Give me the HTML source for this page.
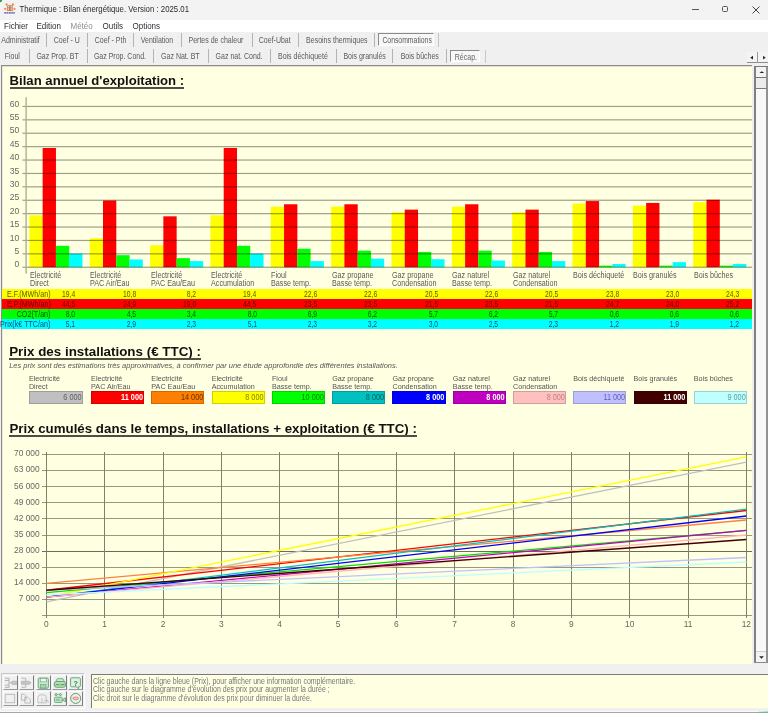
<!DOCTYPE html>
<html><head><meta charset="utf-8"><style>
html,body{margin:0;padding:0;}
body{width:768px;height:713px;overflow:hidden;position:relative;background:#f0f0f0;font-family:'Liberation Sans',sans-serif;}
.r{position:absolute;box-sizing:border-box;}
.t{position:absolute;white-space:nowrap;line-height:1;font-family:'Liberation Sans',sans-serif;}
</style></head><body>
<div class="r" style="left:0px;top:0px;width:768px;height:19.5px;background:#f3f3f3;"></div><svg class="r" style="left:0;top:0" width="18" height="16" viewBox="0 0 18 16">
<circle cx="0" cy="0" r="2.2" fill="#2e9e48"/>
<rect x="5.6" y="4.2" width="8.6" height="8" fill="#f6f0c8"/>
<rect x="7.2" y="5.3" width="5.4" height="5.7" fill="#b8706a"/>
<rect x="7.9" y="6" width="1.3" height="1.1" fill="#f0d8d0"/><rect x="10.6" y="6" width="1.3" height="1.1" fill="#f0d8d0"/>
<rect x="7.9" y="7.6" width="1.3" height="1.1" fill="#f0d8d0"/><rect x="10.6" y="7.6" width="1.3" height="1.1" fill="#f0d8d0"/>
<rect x="7.9" y="9.2" width="1.3" height="1.1" fill="#f0d8d0"/><rect x="10.6" y="9.2" width="1.3" height="1.1" fill="#f0d8d0"/>
<circle cx="6.5" cy="4.4" r="1.05" fill="#ff7a3a"/><circle cx="12.9" cy="4.4" r="1.05" fill="#ff7a3a"/>
<circle cx="5.2" cy="8.9" r="1.15" fill="#ff8a40"/><circle cx="14.5" cy="8.9" r="1.15" fill="#ff8a40"/>
<rect x="4.3" y="12.1" width="10.6" height="1.5" fill="#e8e0a0"/>
<rect x="4.3" y="12.1" width="1.6" height="1.5" fill="#6a6ae0"/><rect x="6.4" y="12.1" width="2" height="1.5" fill="#6a6ae0"/><rect x="9" y="12.1" width="1.8" height="1.5" fill="#6a6ae0"/><rect x="11.3" y="12.1" width="1.8" height="1.5" fill="#6a6ae0"/><rect x="13.4" y="12.1" width="1.5" height="1.5" fill="#6a6ae0"/>
</svg><div class="t" style="left:19.50px;top:6.07px;font-size:7.8px;color:#2a2a2a;font-weight:normal;font-style:normal;transform:scale(1.0,1.1);transform-origin:left 6.63px;">Thermique : Bilan énergétique. Version : 2025.01</div><div class="r" style="left:692px;top:9px;width:7px;height:1px;background:#555;"></div><div class="r" style="left:722px;top:6.3px;width:5.5px;height:5.5px;border:1px solid #555;border-radius:1.5px"></div><svg class="r" style="left:752px;top:6px" width="8" height="8" viewBox="0 0 8 8"><path d="M0.5 0.5 L7.5 7.5 M7.5 0.5 L0.5 7.5" stroke="#444" stroke-width="1"/></svg><div class="r" style="left:0px;top:19.5px;width:768px;height:12.5px;background:#ffffff;"></div><div class="t" style="left:4.00px;top:22.50px;font-size:8.0px;color:#2a2e36;font-weight:normal;font-style:normal;transform:scale(1.0,1.1);transform-origin:left 6.80px;">Fichier</div><div class="t" style="left:36.50px;top:22.50px;font-size:8.0px;color:#2a2e36;font-weight:normal;font-style:normal;transform:scale(1.0,1.1);transform-origin:left 6.80px;">Edition</div><div class="t" style="left:70.50px;top:22.50px;font-size:8.0px;color:#8d8d8d;font-weight:normal;font-style:normal;transform:scale(1.0,1.1);transform-origin:left 6.80px;">Météo</div><div class="t" style="left:102.50px;top:22.50px;font-size:8.0px;color:#2a2e36;font-weight:normal;font-style:normal;transform:scale(1.0,1.1);transform-origin:left 6.80px;">Outils</div><div class="t" style="left:132.50px;top:22.50px;font-size:8.0px;color:#2a2e36;font-weight:normal;font-style:normal;transform:scale(1.0,1.1);transform-origin:left 6.80px;">Options</div><div class="r" style="left:0px;top:32px;width:768px;height:33px;background:#f0f0f0;"></div><div class="t" style="left:1.30px;top:36.95px;font-size:7.0px;color:#5a5a5a;font-weight:normal;font-style:normal;transform:scale(1.0,1.25);transform-origin:left 5.95px;">Administratif</div><div class="r" style="left:46.4px;top:33.3px;width:1px;height:14px;background:#b4b4b4;"></div><div class="t" style="left:53.80px;top:36.95px;font-size:7.0px;color:#5a5a5a;font-weight:normal;font-style:normal;transform:scale(1.0,1.25);transform-origin:left 5.95px;">Coef - U</div><div class="r" style="left:87.2px;top:33.3px;width:1px;height:14px;background:#b4b4b4;"></div><div class="t" style="left:94.80px;top:36.95px;font-size:7.0px;color:#5a5a5a;font-weight:normal;font-style:normal;transform:scale(1.0,1.25);transform-origin:left 5.95px;">Coef - Pth</div><div class="r" style="left:133px;top:33.3px;width:1px;height:14px;background:#b4b4b4;"></div><div class="t" style="left:140.80px;top:36.95px;font-size:7.0px;color:#5a5a5a;font-weight:normal;font-style:normal;transform:scale(1.0,1.25);transform-origin:left 5.95px;">Ventilation</div><div class="r" style="left:181.2px;top:33.3px;width:1px;height:14px;background:#b4b4b4;"></div><div class="t" style="left:188.50px;top:36.95px;font-size:7.0px;color:#5a5a5a;font-weight:normal;font-style:normal;transform:scale(1.0,1.25);transform-origin:left 5.95px;">Pertes de chaleur</div><div class="r" style="left:251.5px;top:33.3px;width:1px;height:14px;background:#b4b4b4;"></div><div class="t" style="left:258.80px;top:36.95px;font-size:7.0px;color:#5a5a5a;font-weight:normal;font-style:normal;transform:scale(1.0,1.25);transform-origin:left 5.95px;">Coef-Ubat</div><div class="r" style="left:298.4px;top:33.3px;width:1px;height:14px;background:#b4b4b4;"></div><div class="t" style="left:306.10px;top:36.95px;font-size:7.0px;color:#5a5a5a;font-weight:normal;font-style:normal;transform:scale(1.0,1.25);transform-origin:left 5.95px;">Besoins thermiques</div><div class="r" style="left:373.9px;top:33.3px;width:1px;height:14px;background:#b4b4b4;"></div><div class="r" style="left:377.8px;top:33.3px;width:56.2px;height:13.2px;border-top:1.5px solid #8a8a8a;border-left:1.5px solid #8a8a8a;border-right:1px solid #fff;border-bottom:1px solid #fff;background:#f7f7f7"></div><div class="t" style="left:382.40px;top:37.78px;font-size:6.85px;color:#5a5a5a;font-weight:normal;font-style:normal;transform:scale(1.0,1.25);transform-origin:left 5.82px;">Consommations</div><div class="r" style="left:437.9px;top:33.3px;width:1px;height:14px;background:#c4c4c4;"></div><div class="t" style="left:4.70px;top:52.65px;font-size:7.0px;color:#5a5a5a;font-weight:normal;font-style:normal;transform:scale(1.0,1.25);transform-origin:left 5.95px;">Fioul</div><div class="r" style="left:29.1px;top:49.4px;width:1px;height:13.5px;background:#b4b4b4;"></div><div class="t" style="left:36.40px;top:52.65px;font-size:7.0px;color:#5a5a5a;font-weight:normal;font-style:normal;transform:scale(1.0,1.25);transform-origin:left 5.95px;">Gaz Prop. BT</div><div class="r" style="left:86.7px;top:49.4px;width:1px;height:13.5px;background:#b4b4b4;"></div><div class="t" style="left:93.90px;top:52.65px;font-size:7.0px;color:#5a5a5a;font-weight:normal;font-style:normal;transform:scale(1.0,1.25);transform-origin:left 5.95px;">Gaz Prop. Cond.</div><div class="r" style="left:153.3px;top:49.4px;width:1px;height:13.5px;background:#b4b4b4;"></div><div class="t" style="left:161.10px;top:52.65px;font-size:7.0px;color:#5a5a5a;font-weight:normal;font-style:normal;transform:scale(1.0,1.25);transform-origin:left 5.95px;">Gaz Nat. BT</div><div class="r" style="left:207.8px;top:49.4px;width:1px;height:13.5px;background:#b4b4b4;"></div><div class="t" style="left:215.60px;top:52.65px;font-size:7.0px;color:#5a5a5a;font-weight:normal;font-style:normal;transform:scale(1.0,1.25);transform-origin:left 5.95px;">Gaz nat. Cond.</div><div class="r" style="left:270.3px;top:49.4px;width:1px;height:13.5px;background:#b4b4b4;"></div><div class="t" style="left:278.00px;top:52.65px;font-size:7.0px;color:#5a5a5a;font-weight:normal;font-style:normal;transform:scale(1.0,1.25);transform-origin:left 5.95px;">Bois déchiqueté</div><div class="r" style="left:335.6px;top:49.4px;width:1px;height:13.5px;background:#b4b4b4;"></div><div class="t" style="left:343.40px;top:52.65px;font-size:7.0px;color:#5a5a5a;font-weight:normal;font-style:normal;transform:scale(1.0,1.25);transform-origin:left 5.95px;">Bois granulés</div><div class="r" style="left:392.3px;top:49.4px;width:1px;height:13.5px;background:#b4b4b4;"></div><div class="t" style="left:400.70px;top:52.65px;font-size:7.0px;color:#5a5a5a;font-weight:normal;font-style:normal;transform:scale(1.0,1.25);transform-origin:left 5.95px;">Bois bûches</div><div class="r" style="left:445.5px;top:49.4px;width:1px;height:13.5px;background:#b4b4b4;"></div><div class="r" style="left:450.1px;top:49.7px;width:30px;height:12.4px;border-top:1.8px solid #8a8a8a;border-left:1.5px solid #8a8a8a;border-right:1px solid #fff;border-bottom:1px solid #fff;background:#f7f7f7"></div><div class="t" style="left:454.80px;top:53.65px;font-size:7.0px;color:#666;font-weight:normal;font-style:normal;transform:scale(1.0,1.25);transform-origin:left 5.95px;">Récap.</div><div class="r" style="left:484.5px;top:49.5px;width:1px;height:13.4px;background:#c8c8c8;"></div><div class="r" style="left:746.8px;top:52.3px;width:10.6px;height:10.6px;background:#f4f4f4;border-bottom:1.2px solid #8c8c8c"></div><div class="r" style="left:758.4px;top:52.3px;width:9.6px;height:10.6px;background:#f4f4f4;border-bottom:1.2px solid #8c8c8c"></div><div class="r" style="left:757.4px;top:52px;width:1px;height:11px;background:#9a9a9a;"></div><svg class="r" style="left:740px;top:50px" width="28" height="14"><path d="M10.2 7.7 L13 5.8 L13 9.6 Z" fill="#222"/><path d="M23.1 5.8 L25.7 7.7 L23.1 9.6 Z" fill="#222"/></svg><div class="r" style="left:0px;top:65px;width:768px;height:610px;background:#efefef;"></div><div class="r" style="left:1px;top:64.8px;width:750.8px;height:599.2px;background:#ffffe2;box-shadow: inset 1.2px 1.2px 0 #8c8c8c;"></div><div class="r" style="left:1px;top:663.6px;width:751px;height:0.8px;background:#fafafa;"></div><div class="r" style="left:753.8px;top:65.9px;width:2.3px;height:597px;background:#808080;"></div><div class="r" style="left:756.1px;top:66.9px;width:10.2px;height:595.5px;background:#f8f8f8;"></div><div class="r" style="left:766.3px;top:65.9px;width:1.7px;height:597px;background:#929292;"></div><div class="r" style="left:753.8px;top:65.9px;width:14.2px;height:1.1px;background:#7a7a7a;"></div><div class="r" style="left:756.1px;top:66.9px;width:10.2px;height:11.1px;background:#f3f3f3;border-bottom:1.1px solid #747474"></div><svg class="r" style="left:756px;top:67px" width="11" height="10"><path d="M3.5 6.1 L5.8 4.2 L8.1 6.1 Z" fill="#1a1a1a"/></svg><div class="r" style="left:756.1px;top:78px;width:10.2px;height:11.3px;background:#ebebeb;border-bottom:1.1px solid #7a7a7a"></div><div class="r" style="left:756.1px;top:650.6px;width:10.2px;height:11.6px;background:#f3f3f3;border-top:1px solid #d0d0d0"></div><svg class="r" style="left:756px;top:652px" width="11" height="10"><path d="M3.2 4.2 L7.8 4.2 L5.5 6.8 Z" fill="#222"/></svg><div class="r" style="left:753.8px;top:662.2px;width:14.2px;height:1.3px;background:#8a8a8a;"></div><div class="t" style="left:9.60px;top:74.04px;font-size:13.13px;color:#111;font-weight:bold;font-style:normal;">Bilan annuel d'exploitation :</div><div class="r" style="left:9.6px;top:86.5px;width:174.5px;height:2.0px;background:#4e4e44;"></div><svg class="r" style="left:0;top:0" width="768" height="713" viewBox="0 0 768 713"><rect x="29.40" y="215.26" width="13.3" height="51.99" fill="#ffff00"/><rect x="42.65" y="147.99" width="13.3" height="119.26" fill="#ff0000"/><rect x="55.90" y="245.81" width="13.3" height="21.44" fill="#00ff00"/><rect x="69.15" y="253.58" width="13.3" height="13.67" fill="#00ffff"/><rect x="89.75" y="238.31" width="13.3" height="28.94" fill="#ffff00"/><rect x="103.00" y="200.52" width="13.3" height="66.73" fill="#ff0000"/><rect x="116.25" y="255.19" width="13.3" height="12.06" fill="#00ff00"/><rect x="129.50" y="259.48" width="13.3" height="7.77" fill="#00ffff"/><rect x="150.10" y="245.27" width="13.3" height="21.98" fill="#ffff00"/><rect x="163.35" y="216.33" width="13.3" height="50.92" fill="#ff0000"/><rect x="176.60" y="258.14" width="13.3" height="9.11" fill="#00ff00"/><rect x="189.85" y="261.09" width="13.3" height="6.16" fill="#00ffff"/><rect x="210.45" y="215.26" width="13.3" height="51.99" fill="#ffff00"/><rect x="223.70" y="147.99" width="13.3" height="119.26" fill="#ff0000"/><rect x="236.95" y="245.81" width="13.3" height="21.44" fill="#00ff00"/><rect x="250.20" y="253.58" width="13.3" height="13.67" fill="#00ffff"/><rect x="270.80" y="206.68" width="13.3" height="60.57" fill="#ffff00"/><rect x="284.05" y="204.27" width="13.3" height="62.98" fill="#ff0000"/><rect x="297.30" y="248.76" width="13.3" height="18.49" fill="#00ff00"/><rect x="310.55" y="261.09" width="13.3" height="6.16" fill="#00ffff"/><rect x="331.15" y="206.68" width="13.3" height="60.57" fill="#ffff00"/><rect x="344.40" y="204.27" width="13.3" height="62.98" fill="#ff0000"/><rect x="357.65" y="250.63" width="13.3" height="16.62" fill="#00ff00"/><rect x="370.90" y="258.67" width="13.3" height="8.58" fill="#00ffff"/><rect x="391.50" y="212.31" width="13.3" height="54.94" fill="#ffff00"/><rect x="404.75" y="209.63" width="13.3" height="57.62" fill="#ff0000"/><rect x="418.00" y="251.97" width="13.3" height="15.28" fill="#00ff00"/><rect x="431.25" y="259.21" width="13.3" height="8.04" fill="#00ffff"/><rect x="451.85" y="206.68" width="13.3" height="60.57" fill="#ffff00"/><rect x="465.10" y="204.27" width="13.3" height="62.98" fill="#ff0000"/><rect x="478.35" y="250.63" width="13.3" height="16.62" fill="#00ff00"/><rect x="491.60" y="260.55" width="13.3" height="6.70" fill="#00ffff"/><rect x="512.20" y="212.31" width="13.3" height="54.94" fill="#ffff00"/><rect x="525.45" y="209.63" width="13.3" height="57.62" fill="#ff0000"/><rect x="538.70" y="251.97" width="13.3" height="15.28" fill="#00ff00"/><rect x="551.95" y="261.09" width="13.3" height="6.16" fill="#00ffff"/><rect x="572.55" y="203.47" width="13.3" height="63.78" fill="#ffff00"/><rect x="585.80" y="201.05" width="13.3" height="66.20" fill="#ff0000"/><rect x="599.05" y="265.64" width="13.3" height="1.61" fill="#00ff00"/><rect x="612.30" y="264.03" width="13.3" height="3.22" fill="#00ffff"/><rect x="632.90" y="205.61" width="13.3" height="61.64" fill="#ffff00"/><rect x="646.15" y="202.93" width="13.3" height="64.32" fill="#ff0000"/><rect x="659.40" y="265.64" width="13.3" height="1.61" fill="#00ff00"/><rect x="672.65" y="262.16" width="13.3" height="5.09" fill="#00ffff"/><rect x="693.25" y="202.13" width="13.3" height="65.12" fill="#ffff00"/><rect x="706.50" y="199.71" width="13.3" height="67.54" fill="#ff0000"/><rect x="719.75" y="265.64" width="13.3" height="1.61" fill="#00ff00"/><rect x="733.00" y="264.03" width="13.3" height="3.22" fill="#00ffff"/><g style="mix-blend-mode:multiply"><rect x="22.5" y="266.65" width="729.5" height="1.2" fill="#a0a098"/><rect x="22.5" y="253.25" width="729.5" height="1.2" fill="#a0a098"/><rect x="22.5" y="239.85" width="729.5" height="1.2" fill="#a0a098"/><rect x="22.5" y="226.45" width="729.5" height="1.2" fill="#a0a098"/><rect x="22.5" y="213.05" width="729.5" height="1.2" fill="#a0a098"/><rect x="22.5" y="199.65" width="729.5" height="1.2" fill="#a0a098"/><rect x="22.5" y="186.25" width="729.5" height="1.2" fill="#a0a098"/><rect x="22.5" y="172.85" width="729.5" height="1.2" fill="#a0a098"/><rect x="22.5" y="159.45" width="729.5" height="1.2" fill="#a0a098"/><rect x="22.5" y="146.05" width="729.5" height="1.2" fill="#a0a098"/><rect x="22.5" y="132.65" width="729.5" height="1.2" fill="#a0a098"/><rect x="22.5" y="119.25" width="729.5" height="1.2" fill="#a0a098"/><rect x="22.5" y="105.85" width="729.5" height="1.2" fill="#a0a098"/><rect x="25.4" y="97.2" width="1.4" height="176.4" fill="#b0b0a4"/></g></svg><div class="t" style="right:748.80px;top:260.34px;font-size:8.6px;color:#666;font-weight:normal;font-style:normal;transform:scale(1.0,1.1);transform-origin:right 7.31px;">0</div><div class="t" style="right:748.80px;top:246.94px;font-size:8.6px;color:#666;font-weight:normal;font-style:normal;transform:scale(1.0,1.1);transform-origin:right 7.31px;">5</div><div class="t" style="right:748.80px;top:233.54px;font-size:8.6px;color:#666;font-weight:normal;font-style:normal;transform:scale(1.0,1.1);transform-origin:right 7.31px;">10</div><div class="t" style="right:748.80px;top:220.14px;font-size:8.6px;color:#666;font-weight:normal;font-style:normal;transform:scale(1.0,1.1);transform-origin:right 7.31px;">15</div><div class="t" style="right:748.80px;top:206.74px;font-size:8.6px;color:#666;font-weight:normal;font-style:normal;transform:scale(1.0,1.1);transform-origin:right 7.31px;">20</div><div class="t" style="right:748.80px;top:193.34px;font-size:8.6px;color:#666;font-weight:normal;font-style:normal;transform:scale(1.0,1.1);transform-origin:right 7.31px;">25</div><div class="t" style="right:748.80px;top:179.94px;font-size:8.6px;color:#666;font-weight:normal;font-style:normal;transform:scale(1.0,1.1);transform-origin:right 7.31px;">30</div><div class="t" style="right:748.80px;top:166.54px;font-size:8.6px;color:#666;font-weight:normal;font-style:normal;transform:scale(1.0,1.1);transform-origin:right 7.31px;">35</div><div class="t" style="right:748.80px;top:153.14px;font-size:8.6px;color:#666;font-weight:normal;font-style:normal;transform:scale(1.0,1.1);transform-origin:right 7.31px;">40</div><div class="t" style="right:748.80px;top:139.74px;font-size:8.6px;color:#666;font-weight:normal;font-style:normal;transform:scale(1.0,1.1);transform-origin:right 7.31px;">45</div><div class="t" style="right:748.80px;top:126.34px;font-size:8.6px;color:#666;font-weight:normal;font-style:normal;transform:scale(1.0,1.1);transform-origin:right 7.31px;">50</div><div class="t" style="right:748.80px;top:112.94px;font-size:8.6px;color:#666;font-weight:normal;font-style:normal;transform:scale(1.0,1.1);transform-origin:right 7.31px;">55</div><div class="t" style="right:748.80px;top:99.54px;font-size:8.6px;color:#666;font-weight:normal;font-style:normal;transform:scale(1.0,1.1);transform-origin:right 7.31px;">60</div><div class="t" style="left:29.80px;top:271.93px;font-size:7.5px;color:#5a5a5a;font-weight:normal;font-style:normal;transform:scale(0.96,1.1);transform-origin:left 6.38px;">Electricité</div><div class="t" style="left:29.80px;top:279.93px;font-size:7.5px;color:#5a5a5a;font-weight:normal;font-style:normal;transform:scale(0.96,1.1);transform-origin:left 6.38px;">Direct</div><div class="t" style="left:90.15px;top:271.93px;font-size:7.5px;color:#5a5a5a;font-weight:normal;font-style:normal;transform:scale(0.96,1.1);transform-origin:left 6.38px;">Electricité</div><div class="t" style="left:90.15px;top:279.93px;font-size:7.5px;color:#5a5a5a;font-weight:normal;font-style:normal;transform:scale(0.96,1.1);transform-origin:left 6.38px;">PAC Air/Eau</div><div class="t" style="left:150.50px;top:271.93px;font-size:7.5px;color:#5a5a5a;font-weight:normal;font-style:normal;transform:scale(0.96,1.1);transform-origin:left 6.38px;">Electricité</div><div class="t" style="left:150.50px;top:279.93px;font-size:7.5px;color:#5a5a5a;font-weight:normal;font-style:normal;transform:scale(0.96,1.1);transform-origin:left 6.38px;">PAC Eau/Eau</div><div class="t" style="left:210.85px;top:271.93px;font-size:7.5px;color:#5a5a5a;font-weight:normal;font-style:normal;transform:scale(0.96,1.1);transform-origin:left 6.38px;">Electricité</div><div class="t" style="left:210.85px;top:279.93px;font-size:7.5px;color:#5a5a5a;font-weight:normal;font-style:normal;transform:scale(0.96,1.1);transform-origin:left 6.38px;">Accumulation</div><div class="t" style="left:271.20px;top:271.93px;font-size:7.5px;color:#5a5a5a;font-weight:normal;font-style:normal;transform:scale(0.96,1.1);transform-origin:left 6.38px;">Fioul</div><div class="t" style="left:271.20px;top:279.93px;font-size:7.5px;color:#5a5a5a;font-weight:normal;font-style:normal;transform:scale(0.96,1.1);transform-origin:left 6.38px;">Basse temp.</div><div class="t" style="left:331.55px;top:271.93px;font-size:7.5px;color:#5a5a5a;font-weight:normal;font-style:normal;transform:scale(0.96,1.1);transform-origin:left 6.38px;">Gaz propane</div><div class="t" style="left:331.55px;top:279.93px;font-size:7.5px;color:#5a5a5a;font-weight:normal;font-style:normal;transform:scale(0.96,1.1);transform-origin:left 6.38px;">Basse temp.</div><div class="t" style="left:391.90px;top:271.93px;font-size:7.5px;color:#5a5a5a;font-weight:normal;font-style:normal;transform:scale(0.96,1.1);transform-origin:left 6.38px;">Gaz propane</div><div class="t" style="left:391.90px;top:279.93px;font-size:7.5px;color:#5a5a5a;font-weight:normal;font-style:normal;transform:scale(0.96,1.1);transform-origin:left 6.38px;">Condensation</div><div class="t" style="left:452.25px;top:271.93px;font-size:7.5px;color:#5a5a5a;font-weight:normal;font-style:normal;transform:scale(0.96,1.1);transform-origin:left 6.38px;">Gaz naturel</div><div class="t" style="left:452.25px;top:279.93px;font-size:7.5px;color:#5a5a5a;font-weight:normal;font-style:normal;transform:scale(0.96,1.1);transform-origin:left 6.38px;">Basse temp.</div><div class="t" style="left:512.60px;top:271.93px;font-size:7.5px;color:#5a5a5a;font-weight:normal;font-style:normal;transform:scale(0.96,1.1);transform-origin:left 6.38px;">Gaz naturel</div><div class="t" style="left:512.60px;top:279.93px;font-size:7.5px;color:#5a5a5a;font-weight:normal;font-style:normal;transform:scale(0.96,1.1);transform-origin:left 6.38px;">Condensation</div><div class="t" style="left:572.95px;top:271.93px;font-size:7.5px;color:#5a5a5a;font-weight:normal;font-style:normal;transform:scale(0.96,1.1);transform-origin:left 6.38px;">Bois déchiqueté</div><div class="t" style="left:633.30px;top:271.93px;font-size:7.5px;color:#5a5a5a;font-weight:normal;font-style:normal;transform:scale(0.96,1.1);transform-origin:left 6.38px;">Bois granulés</div><div class="t" style="left:693.65px;top:271.93px;font-size:7.5px;color:#5a5a5a;font-weight:normal;font-style:normal;transform:scale(0.96,1.1);transform-origin:left 6.38px;">Bois bûches</div><div class="r" style="left:2px;top:289px;width:750px;height:10px;background:#ffff00;"></div><div class="t" style="right:717.20px;top:290.69px;font-size:7.3px;color:#5c5c00;font-weight:normal;font-style:normal;transform:scale(0.98,1.12);transform-origin:right 6.21px;">E.F.(MWh/an)</div><div class="t" style="right:692.40px;top:290.69px;font-size:7.3px;color:#5c5c00;font-weight:normal;font-style:normal;transform:scale(0.93,1.12);transform-origin:right 6.21px;">19,4</div><div class="t" style="right:632.05px;top:290.69px;font-size:7.3px;color:#5c5c00;font-weight:normal;font-style:normal;transform:scale(0.93,1.12);transform-origin:right 6.21px;">10,8</div><div class="t" style="right:571.70px;top:290.69px;font-size:7.3px;color:#5c5c00;font-weight:normal;font-style:normal;transform:scale(0.93,1.12);transform-origin:right 6.21px;">8,2</div><div class="t" style="right:511.35px;top:290.69px;font-size:7.3px;color:#5c5c00;font-weight:normal;font-style:normal;transform:scale(0.93,1.12);transform-origin:right 6.21px;">19,4</div><div class="t" style="right:451.00px;top:290.69px;font-size:7.3px;color:#5c5c00;font-weight:normal;font-style:normal;transform:scale(0.93,1.12);transform-origin:right 6.21px;">22,6</div><div class="t" style="right:390.65px;top:290.69px;font-size:7.3px;color:#5c5c00;font-weight:normal;font-style:normal;transform:scale(0.93,1.12);transform-origin:right 6.21px;">22,6</div><div class="t" style="right:330.30px;top:290.69px;font-size:7.3px;color:#5c5c00;font-weight:normal;font-style:normal;transform:scale(0.93,1.12);transform-origin:right 6.21px;">20,5</div><div class="t" style="right:269.95px;top:290.69px;font-size:7.3px;color:#5c5c00;font-weight:normal;font-style:normal;transform:scale(0.93,1.12);transform-origin:right 6.21px;">22,6</div><div class="t" style="right:209.60px;top:290.69px;font-size:7.3px;color:#5c5c00;font-weight:normal;font-style:normal;transform:scale(0.93,1.12);transform-origin:right 6.21px;">20,5</div><div class="t" style="right:149.25px;top:290.69px;font-size:7.3px;color:#5c5c00;font-weight:normal;font-style:normal;transform:scale(0.93,1.12);transform-origin:right 6.21px;">23,8</div><div class="t" style="right:88.90px;top:290.69px;font-size:7.3px;color:#5c5c00;font-weight:normal;font-style:normal;transform:scale(0.93,1.12);transform-origin:right 6.21px;">23,0</div><div class="t" style="right:28.55px;top:290.69px;font-size:7.3px;color:#5c5c00;font-weight:normal;font-style:normal;transform:scale(0.93,1.12);transform-origin:right 6.21px;">24,3</div><div class="r" style="left:2px;top:299px;width:750px;height:10px;background:#ff0000;"></div><div class="t" style="right:717.20px;top:300.69px;font-size:7.3px;color:#5c0000;font-weight:normal;font-style:normal;transform:scale(0.98,1.12);transform-origin:right 6.21px;">E.P.(MWh/an)</div><div class="t" style="right:692.40px;top:300.69px;font-size:7.3px;color:#5c0000;font-weight:normal;font-style:normal;transform:scale(0.93,1.12);transform-origin:right 6.21px;">44,5</div><div class="t" style="right:632.05px;top:300.69px;font-size:7.3px;color:#5c0000;font-weight:normal;font-style:normal;transform:scale(0.93,1.12);transform-origin:right 6.21px;">24,9</div><div class="t" style="right:571.70px;top:300.69px;font-size:7.3px;color:#5c0000;font-weight:normal;font-style:normal;transform:scale(0.93,1.12);transform-origin:right 6.21px;">19,0</div><div class="t" style="right:511.35px;top:300.69px;font-size:7.3px;color:#5c0000;font-weight:normal;font-style:normal;transform:scale(0.93,1.12);transform-origin:right 6.21px;">44,5</div><div class="t" style="right:451.00px;top:300.69px;font-size:7.3px;color:#5c0000;font-weight:normal;font-style:normal;transform:scale(0.93,1.12);transform-origin:right 6.21px;">23,5</div><div class="t" style="right:390.65px;top:300.69px;font-size:7.3px;color:#5c0000;font-weight:normal;font-style:normal;transform:scale(0.93,1.12);transform-origin:right 6.21px;">23,5</div><div class="t" style="right:330.30px;top:300.69px;font-size:7.3px;color:#5c0000;font-weight:normal;font-style:normal;transform:scale(0.93,1.12);transform-origin:right 6.21px;">21,5</div><div class="t" style="right:269.95px;top:300.69px;font-size:7.3px;color:#5c0000;font-weight:normal;font-style:normal;transform:scale(0.93,1.12);transform-origin:right 6.21px;">23,5</div><div class="t" style="right:209.60px;top:300.69px;font-size:7.3px;color:#5c0000;font-weight:normal;font-style:normal;transform:scale(0.93,1.12);transform-origin:right 6.21px;">21,5</div><div class="t" style="right:149.25px;top:300.69px;font-size:7.3px;color:#5c0000;font-weight:normal;font-style:normal;transform:scale(0.93,1.12);transform-origin:right 6.21px;">24,7</div><div class="t" style="right:88.90px;top:300.69px;font-size:7.3px;color:#5c0000;font-weight:normal;font-style:normal;transform:scale(0.93,1.12);transform-origin:right 6.21px;">24,0</div><div class="t" style="right:28.55px;top:300.69px;font-size:7.3px;color:#5c0000;font-weight:normal;font-style:normal;transform:scale(0.93,1.12);transform-origin:right 6.21px;">25,2</div><div class="r" style="left:2px;top:309px;width:750px;height:10px;background:#00ff00;"></div><div class="t" style="right:717.20px;top:310.69px;font-size:7.3px;color:#005400;font-weight:normal;font-style:normal;transform:scale(0.98,1.12);transform-origin:right 6.21px;">CO2(T/an)</div><div class="t" style="right:692.40px;top:310.69px;font-size:7.3px;color:#005400;font-weight:normal;font-style:normal;transform:scale(0.93,1.12);transform-origin:right 6.21px;">8,0</div><div class="t" style="right:632.05px;top:310.69px;font-size:7.3px;color:#005400;font-weight:normal;font-style:normal;transform:scale(0.93,1.12);transform-origin:right 6.21px;">4,5</div><div class="t" style="right:571.70px;top:310.69px;font-size:7.3px;color:#005400;font-weight:normal;font-style:normal;transform:scale(0.93,1.12);transform-origin:right 6.21px;">3,4</div><div class="t" style="right:511.35px;top:310.69px;font-size:7.3px;color:#005400;font-weight:normal;font-style:normal;transform:scale(0.93,1.12);transform-origin:right 6.21px;">8,0</div><div class="t" style="right:451.00px;top:310.69px;font-size:7.3px;color:#005400;font-weight:normal;font-style:normal;transform:scale(0.93,1.12);transform-origin:right 6.21px;">6,9</div><div class="t" style="right:390.65px;top:310.69px;font-size:7.3px;color:#005400;font-weight:normal;font-style:normal;transform:scale(0.93,1.12);transform-origin:right 6.21px;">6,2</div><div class="t" style="right:330.30px;top:310.69px;font-size:7.3px;color:#005400;font-weight:normal;font-style:normal;transform:scale(0.93,1.12);transform-origin:right 6.21px;">5,7</div><div class="t" style="right:269.95px;top:310.69px;font-size:7.3px;color:#005400;font-weight:normal;font-style:normal;transform:scale(0.93,1.12);transform-origin:right 6.21px;">6,2</div><div class="t" style="right:209.60px;top:310.69px;font-size:7.3px;color:#005400;font-weight:normal;font-style:normal;transform:scale(0.93,1.12);transform-origin:right 6.21px;">5,7</div><div class="t" style="right:149.25px;top:310.69px;font-size:7.3px;color:#005400;font-weight:normal;font-style:normal;transform:scale(0.93,1.12);transform-origin:right 6.21px;">0,6</div><div class="t" style="right:88.90px;top:310.69px;font-size:7.3px;color:#005400;font-weight:normal;font-style:normal;transform:scale(0.93,1.12);transform-origin:right 6.21px;">0,6</div><div class="t" style="right:28.55px;top:310.69px;font-size:7.3px;color:#005400;font-weight:normal;font-style:normal;transform:scale(0.93,1.12);transform-origin:right 6.21px;">0,6</div><div class="r" style="left:2px;top:319px;width:750px;height:10px;background:#00ffff;"></div><div class="t" style="right:717.20px;top:320.69px;font-size:7.3px;color:#004c84;font-weight:normal;font-style:normal;transform:scale(0.98,1.12);transform-origin:right 6.21px;">Prix(k€ TTC/an)</div><div class="t" style="right:692.40px;top:320.69px;font-size:7.3px;color:#004c84;font-weight:normal;font-style:normal;transform:scale(0.93,1.12);transform-origin:right 6.21px;">5,1</div><div class="t" style="right:632.05px;top:320.69px;font-size:7.3px;color:#004c84;font-weight:normal;font-style:normal;transform:scale(0.93,1.12);transform-origin:right 6.21px;">2,9</div><div class="t" style="right:571.70px;top:320.69px;font-size:7.3px;color:#004c84;font-weight:normal;font-style:normal;transform:scale(0.93,1.12);transform-origin:right 6.21px;">2,3</div><div class="t" style="right:511.35px;top:320.69px;font-size:7.3px;color:#004c84;font-weight:normal;font-style:normal;transform:scale(0.93,1.12);transform-origin:right 6.21px;">5,1</div><div class="t" style="right:451.00px;top:320.69px;font-size:7.3px;color:#004c84;font-weight:normal;font-style:normal;transform:scale(0.93,1.12);transform-origin:right 6.21px;">2,3</div><div class="t" style="right:390.65px;top:320.69px;font-size:7.3px;color:#004c84;font-weight:normal;font-style:normal;transform:scale(0.93,1.12);transform-origin:right 6.21px;">3,2</div><div class="t" style="right:330.30px;top:320.69px;font-size:7.3px;color:#004c84;font-weight:normal;font-style:normal;transform:scale(0.93,1.12);transform-origin:right 6.21px;">3,0</div><div class="t" style="right:269.95px;top:320.69px;font-size:7.3px;color:#004c84;font-weight:normal;font-style:normal;transform:scale(0.93,1.12);transform-origin:right 6.21px;">2,5</div><div class="t" style="right:209.60px;top:320.69px;font-size:7.3px;color:#004c84;font-weight:normal;font-style:normal;transform:scale(0.93,1.12);transform-origin:right 6.21px;">2,3</div><div class="t" style="right:149.25px;top:320.69px;font-size:7.3px;color:#004c84;font-weight:normal;font-style:normal;transform:scale(0.93,1.12);transform-origin:right 6.21px;">1,2</div><div class="t" style="right:88.90px;top:320.69px;font-size:7.3px;color:#004c84;font-weight:normal;font-style:normal;transform:scale(0.93,1.12);transform-origin:right 6.21px;">1,9</div><div class="t" style="right:28.55px;top:320.69px;font-size:7.3px;color:#004c84;font-weight:normal;font-style:normal;transform:scale(0.93,1.12);transform-origin:right 6.21px;">1,2</div><div class="t" style="left:9.20px;top:344.92px;font-size:13.39px;color:#111;font-weight:bold;font-style:normal;">Prix des installations (€ TTC) :</div><div class="r" style="left:9.2px;top:357.6px;width:192px;height:2.0px;background:#4e4e44;"></div><div class="t" style="left:9.20px;top:361.85px;font-size:7.47px;color:#555;font-weight:normal;font-style:italic;">Les prix sont des estimations très approximatives, à confirmer par une étude approfondie des différentes installations.</div><div class="t" style="left:28.90px;top:375.28px;font-size:7.2px;color:#555;font-weight:normal;font-style:normal;transform:scale(1.0,1.1);transform-origin:left 6.12px;">Electricité</div><div class="t" style="left:28.90px;top:382.98px;font-size:7.2px;color:#555;font-weight:normal;font-style:normal;transform:scale(1.0,1.1);transform-origin:left 6.12px;">Direct</div><div class="r" style="left:28.90px;top:391px;width:53.9px;height:12.5px;background:#c0c0c0;box-shadow:inset 0 0 0 1px rgba(0,0,0,0.18)"></div><div class="t" style="right:686.40px;top:393.69px;font-size:7.3px;color:#606060;font-weight:normal;font-style:normal;transform:scale(1.0,1.2);transform-origin:right 6.21px;">6 000</div><div class="t" style="left:91.10px;top:375.28px;font-size:7.2px;color:#555;font-weight:normal;font-style:normal;transform:scale(1.0,1.1);transform-origin:left 6.12px;">Electricité</div><div class="t" style="left:91.10px;top:382.98px;font-size:7.2px;color:#555;font-weight:normal;font-style:normal;transform:scale(1.0,1.1);transform-origin:left 6.12px;">PAC Air/Eau</div><div class="r" style="left:91.10px;top:391px;width:53.1px;height:12.5px;background:#ff0000;box-shadow:inset 0 0 0 1px rgba(0,0,0,0.18)"></div><div class="t" style="right:625.00px;top:393.69px;font-size:7.3px;color:#ffffff;font-weight:bold;font-style:normal;transform:scale(1.0,1.2);transform-origin:right 6.21px;">11 000</div><div class="t" style="left:151.37px;top:375.28px;font-size:7.2px;color:#555;font-weight:normal;font-style:normal;transform:scale(1.0,1.1);transform-origin:left 6.12px;">Electricité</div><div class="t" style="left:151.37px;top:382.98px;font-size:7.2px;color:#555;font-weight:normal;font-style:normal;transform:scale(1.0,1.1);transform-origin:left 6.12px;">PAC Eau/Eau</div><div class="r" style="left:151.37px;top:391px;width:53.1px;height:12.5px;background:#ff8000;box-shadow:inset 0 0 0 1px rgba(0,0,0,0.18)"></div><div class="t" style="right:564.73px;top:393.69px;font-size:7.3px;color:#603000;font-weight:normal;font-style:normal;transform:scale(1.0,1.2);transform-origin:right 6.21px;">14 000</div><div class="t" style="left:211.64px;top:375.28px;font-size:7.2px;color:#555;font-weight:normal;font-style:normal;transform:scale(1.0,1.1);transform-origin:left 6.12px;">Electricité</div><div class="t" style="left:211.64px;top:382.98px;font-size:7.2px;color:#555;font-weight:normal;font-style:normal;transform:scale(1.0,1.1);transform-origin:left 6.12px;">Accumulation</div><div class="r" style="left:211.64px;top:391px;width:53.1px;height:12.5px;background:#ffff00;box-shadow:inset 0 0 0 1px rgba(0,0,0,0.18)"></div><div class="t" style="right:504.46px;top:393.69px;font-size:7.3px;color:#808000;font-weight:normal;font-style:normal;transform:scale(1.0,1.2);transform-origin:right 6.21px;">8 000</div><div class="t" style="left:271.91px;top:375.28px;font-size:7.2px;color:#555;font-weight:normal;font-style:normal;transform:scale(1.0,1.1);transform-origin:left 6.12px;">Fioul</div><div class="t" style="left:271.91px;top:382.98px;font-size:7.2px;color:#555;font-weight:normal;font-style:normal;transform:scale(1.0,1.1);transform-origin:left 6.12px;">Basse temp.</div><div class="r" style="left:271.91px;top:391px;width:53.1px;height:12.5px;background:#00ff00;box-shadow:inset 0 0 0 1px rgba(0,0,0,0.18)"></div><div class="t" style="right:444.19px;top:393.69px;font-size:7.3px;color:#008000;font-weight:normal;font-style:normal;transform:scale(1.0,1.2);transform-origin:right 6.21px;">10 000</div><div class="t" style="left:332.18px;top:375.28px;font-size:7.2px;color:#555;font-weight:normal;font-style:normal;transform:scale(1.0,1.1);transform-origin:left 6.12px;">Gaz propane</div><div class="t" style="left:332.18px;top:382.98px;font-size:7.2px;color:#555;font-weight:normal;font-style:normal;transform:scale(1.0,1.1);transform-origin:left 6.12px;">Basse temp.</div><div class="r" style="left:332.18px;top:391px;width:53.1px;height:12.5px;background:#00c0c0;box-shadow:inset 0 0 0 1px rgba(0,0,0,0.18)"></div><div class="t" style="right:383.92px;top:393.69px;font-size:7.3px;color:#006060;font-weight:normal;font-style:normal;transform:scale(1.0,1.2);transform-origin:right 6.21px;">8 000</div><div class="t" style="left:392.45px;top:375.28px;font-size:7.2px;color:#555;font-weight:normal;font-style:normal;transform:scale(1.0,1.1);transform-origin:left 6.12px;">Gaz propane</div><div class="t" style="left:392.45px;top:382.98px;font-size:7.2px;color:#555;font-weight:normal;font-style:normal;transform:scale(1.0,1.1);transform-origin:left 6.12px;">Condensation</div><div class="r" style="left:392.45px;top:391px;width:53.1px;height:12.5px;background:#0000ff;box-shadow:inset 0 0 0 1px rgba(0,0,0,0.18)"></div><div class="t" style="right:323.65px;top:393.69px;font-size:7.3px;color:#ffffff;font-weight:bold;font-style:normal;transform:scale(1.0,1.2);transform-origin:right 6.21px;">8 000</div><div class="t" style="left:452.72px;top:375.28px;font-size:7.2px;color:#555;font-weight:normal;font-style:normal;transform:scale(1.0,1.1);transform-origin:left 6.12px;">Gaz naturel</div><div class="t" style="left:452.72px;top:382.98px;font-size:7.2px;color:#555;font-weight:normal;font-style:normal;transform:scale(1.0,1.1);transform-origin:left 6.12px;">Basse temp.</div><div class="r" style="left:452.72px;top:391px;width:53.1px;height:12.5px;background:#c000c0;box-shadow:inset 0 0 0 1px rgba(0,0,0,0.18)"></div><div class="t" style="right:263.38px;top:393.69px;font-size:7.3px;color:#ffffff;font-weight:bold;font-style:normal;transform:scale(1.0,1.2);transform-origin:right 6.21px;">8 000</div><div class="t" style="left:512.99px;top:375.28px;font-size:7.2px;color:#555;font-weight:normal;font-style:normal;transform:scale(1.0,1.1);transform-origin:left 6.12px;">Gaz naturel</div><div class="t" style="left:512.99px;top:382.98px;font-size:7.2px;color:#555;font-weight:normal;font-style:normal;transform:scale(1.0,1.1);transform-origin:left 6.12px;">Condensation</div><div class="r" style="left:512.99px;top:391px;width:53.1px;height:12.5px;background:#ffc0c0;box-shadow:inset 0 0 0 1px rgba(0,0,0,0.18)"></div><div class="t" style="right:203.11px;top:393.69px;font-size:7.3px;color:#c08080;font-weight:normal;font-style:normal;transform:scale(1.0,1.2);transform-origin:right 6.21px;">8 000</div><div class="t" style="left:573.26px;top:375.28px;font-size:7.2px;color:#555;font-weight:normal;font-style:normal;transform:scale(1.0,1.1);transform-origin:left 6.12px;">Bois déchiqueté</div><div class="r" style="left:573.26px;top:391px;width:53.1px;height:12.5px;background:#c0c0ff;box-shadow:inset 0 0 0 1px rgba(0,0,0,0.18)"></div><div class="t" style="right:142.84px;top:393.69px;font-size:7.3px;color:#6060c0;font-weight:normal;font-style:normal;transform:scale(1.0,1.2);transform-origin:right 6.21px;">11 000</div><div class="t" style="left:633.53px;top:375.28px;font-size:7.2px;color:#555;font-weight:normal;font-style:normal;transform:scale(1.0,1.1);transform-origin:left 6.12px;">Bois granulés</div><div class="r" style="left:633.53px;top:391px;width:53.1px;height:12.5px;background:#400000;box-shadow:inset 0 0 0 1px rgba(0,0,0,0.18)"></div><div class="t" style="right:82.57px;top:393.69px;font-size:7.3px;color:#ffffff;font-weight:bold;font-style:normal;transform:scale(1.0,1.2);transform-origin:right 6.21px;">11 000</div><div class="t" style="left:693.80px;top:375.28px;font-size:7.2px;color:#555;font-weight:normal;font-style:normal;transform:scale(1.0,1.1);transform-origin:left 6.12px;">Bois bûches</div><div class="r" style="left:693.80px;top:391px;width:53.1px;height:12.5px;background:#c0ffff;box-shadow:inset 0 0 0 1px rgba(0,0,0,0.18)"></div><div class="t" style="right:22.30px;top:393.69px;font-size:7.3px;color:#60a0a0;font-weight:normal;font-style:normal;transform:scale(1.0,1.2);transform-origin:right 6.21px;">9 000</div><div class="t" style="left:9.40px;top:421.99px;font-size:13.31px;color:#111;font-weight:bold;font-style:normal;">Prix cumulés dans le temps, installations + exploitation (€ TTC) :</div><div class="r" style="left:9.4px;top:434.6px;width:408px;height:2.0px;background:#4e4e44;"></div><svg class="r" style="left:0;top:0" width="768" height="713" viewBox="0 0 768 713"><g style="mix-blend-mode:multiply"><rect x="42" y="615" width="710" height="1" fill="#98988c"/><rect x="42" y="599" width="710" height="1" fill="#98988c"/><rect x="42" y="583" width="710" height="1" fill="#98988c"/><rect x="42" y="567" width="710" height="1" fill="#98988c"/><rect x="42" y="551" width="710" height="1" fill="#6c6c64"/><rect x="42" y="535" width="710" height="1" fill="#98988c"/><rect x="42" y="518" width="710" height="1" fill="#98988c"/><rect x="42" y="502" width="710" height="1" fill="#98988c"/><rect x="42" y="486" width="710" height="1" fill="#98988c"/><rect x="42" y="470" width="710" height="1" fill="#98988c"/><rect x="42" y="454" width="710" height="1" fill="#98988c"/><rect x="46" y="452" width="1" height="166" fill="#808078"/><rect x="104" y="452" width="1" height="166" fill="#808078"/><rect x="163" y="452" width="1" height="166" fill="#808078"/><rect x="221" y="452" width="1" height="166" fill="#808078"/><rect x="279" y="452" width="1" height="166" fill="#808078"/><rect x="338" y="452" width="1" height="166" fill="#808078"/><rect x="396" y="452" width="1" height="166" fill="#808078"/><rect x="454" y="452" width="1" height="166" fill="#808078"/><rect x="513" y="452" width="1" height="166" fill="#808078"/><rect x="571" y="452" width="1" height="166" fill="#808078"/><rect x="629" y="452" width="1" height="166" fill="#808078"/><rect x="688" y="452" width="1" height="166" fill="#808078"/><rect x="746" y="452" width="1" height="166" fill="#808078"/></g><line x1="46.35" y1="601.79" x2="746.35" y2="462.20" stroke="#c0c0c0" stroke-width="1.35"/><line x1="46.35" y1="590.28" x2="746.35" y2="510.50" stroke="#ff0000" stroke-width="1.35"/><line x1="46.35" y1="583.38" x2="746.35" y2="520.00" stroke="#ff8040" stroke-width="1.35"/><line x1="46.35" y1="597.19" x2="746.35" y2="456.80" stroke="#ffff00" stroke-width="1.35"/><line x1="46.35" y1="592.58" x2="746.35" y2="530.40" stroke="#00e000" stroke-width="1.35"/><line x1="46.35" y1="597.19" x2="746.35" y2="509.10" stroke="#00c0c0" stroke-width="1.35"/><line x1="46.35" y1="597.19" x2="746.35" y2="516.00" stroke="#0000ff" stroke-width="1.35"/><line x1="46.35" y1="597.19" x2="746.35" y2="530.30" stroke="#c000c0" stroke-width="1.35"/><line x1="46.35" y1="597.19" x2="746.35" y2="535.00" stroke="#ffb8b8" stroke-width="1.35"/><line x1="46.35" y1="590.28" x2="746.35" y2="557.50" stroke="#c0c0ff" stroke-width="1.35"/><line x1="46.35" y1="590.28" x2="746.35" y2="539.50" stroke="#400000" stroke-width="1.35"/><line x1="46.35" y1="594.89" x2="746.35" y2="562.00" stroke="#b8ffff" stroke-width="1.35"/></svg><div class="t" style="right:728.40px;top:594.27px;font-size:8.37px;color:#666;font-weight:normal;font-style:normal;transform:scale(1.0,1.12);transform-origin:right 7.11px;">7 000</div><div class="t" style="right:728.40px;top:578.16px;font-size:8.37px;color:#666;font-weight:normal;font-style:normal;transform:scale(1.0,1.12);transform-origin:right 7.11px;">14 000</div><div class="t" style="right:728.40px;top:562.05px;font-size:8.37px;color:#666;font-weight:normal;font-style:normal;transform:scale(1.0,1.12);transform-origin:right 7.11px;">21 000</div><div class="t" style="right:728.40px;top:545.94px;font-size:8.37px;color:#666;font-weight:normal;font-style:normal;transform:scale(1.0,1.12);transform-origin:right 7.11px;">28 000</div><div class="t" style="right:728.40px;top:529.83px;font-size:8.37px;color:#666;font-weight:normal;font-style:normal;transform:scale(1.0,1.12);transform-origin:right 7.11px;">35 000</div><div class="t" style="right:728.40px;top:513.72px;font-size:8.37px;color:#666;font-weight:normal;font-style:normal;transform:scale(1.0,1.12);transform-origin:right 7.11px;">42 000</div><div class="t" style="right:728.40px;top:497.61px;font-size:8.37px;color:#666;font-weight:normal;font-style:normal;transform:scale(1.0,1.12);transform-origin:right 7.11px;">49 000</div><div class="t" style="right:728.40px;top:481.50px;font-size:8.37px;color:#666;font-weight:normal;font-style:normal;transform:scale(1.0,1.12);transform-origin:right 7.11px;">56 000</div><div class="t" style="right:728.40px;top:465.38px;font-size:8.37px;color:#666;font-weight:normal;font-style:normal;transform:scale(1.0,1.12);transform-origin:right 7.11px;">63 000</div><div class="t" style="right:728.40px;top:449.27px;font-size:8.37px;color:#666;font-weight:normal;font-style:normal;transform:scale(1.0,1.12);transform-origin:right 7.11px;">70 000</div><div class="t" style="left:46.35px;top:619.86px;font-size:8.4px;color:#666;font-weight:normal;font-style:normal;transform:translateX(-50%) scale(1.0,1.1);transform-origin:center 7.14px;">0</div><div class="t" style="left:104.68px;top:619.86px;font-size:8.4px;color:#666;font-weight:normal;font-style:normal;transform:translateX(-50%) scale(1.0,1.1);transform-origin:center 7.14px;">1</div><div class="t" style="left:163.02px;top:619.86px;font-size:8.4px;color:#666;font-weight:normal;font-style:normal;transform:translateX(-50%) scale(1.0,1.1);transform-origin:center 7.14px;">2</div><div class="t" style="left:221.35px;top:619.86px;font-size:8.4px;color:#666;font-weight:normal;font-style:normal;transform:translateX(-50%) scale(1.0,1.1);transform-origin:center 7.14px;">3</div><div class="t" style="left:279.68px;top:619.86px;font-size:8.4px;color:#666;font-weight:normal;font-style:normal;transform:translateX(-50%) scale(1.0,1.1);transform-origin:center 7.14px;">4</div><div class="t" style="left:338.01px;top:619.86px;font-size:8.4px;color:#666;font-weight:normal;font-style:normal;transform:translateX(-50%) scale(1.0,1.1);transform-origin:center 7.14px;">5</div><div class="t" style="left:396.35px;top:619.86px;font-size:8.4px;color:#666;font-weight:normal;font-style:normal;transform:translateX(-50%) scale(1.0,1.1);transform-origin:center 7.14px;">6</div><div class="t" style="left:454.68px;top:619.86px;font-size:8.4px;color:#666;font-weight:normal;font-style:normal;transform:translateX(-50%) scale(1.0,1.1);transform-origin:center 7.14px;">7</div><div class="t" style="left:513.01px;top:619.86px;font-size:8.4px;color:#666;font-weight:normal;font-style:normal;transform:translateX(-50%) scale(1.0,1.1);transform-origin:center 7.14px;">8</div><div class="t" style="left:571.35px;top:619.86px;font-size:8.4px;color:#666;font-weight:normal;font-style:normal;transform:translateX(-50%) scale(1.0,1.1);transform-origin:center 7.14px;">9</div><div class="t" style="left:629.68px;top:619.86px;font-size:8.4px;color:#666;font-weight:normal;font-style:normal;transform:translateX(-50%) scale(1.0,1.1);transform-origin:center 7.14px;">10</div><div class="t" style="left:688.01px;top:619.86px;font-size:8.4px;color:#666;font-weight:normal;font-style:normal;transform:translateX(-50%) scale(1.0,1.1);transform-origin:center 7.14px;">11</div><div class="t" style="left:746.35px;top:619.86px;font-size:8.4px;color:#666;font-weight:normal;font-style:normal;transform:translateX(-50%) scale(1.0,1.1);transform-origin:center 7.14px;">12</div><div class="r" style="left:0px;top:664.4px;width:768px;height:48.6px;background:#f0f0f0;"></div><div class="r" style="left:1.2px;top:673.4px;width:84.3px;height:35.2px;border-top:1px solid #c8c8c8;border-left:1px solid #c8c8c8;border-right:1px solid #fdfdfd;border-bottom:1px solid #fdfdfd"></div><div class="r" style="left:3.00px;top:675.10px;width:15.2px;height:15.3px;background:#f0f0f0;border-left:1px solid #fcfcfc;border-top:1px solid #fcfcfc;border-right:1.2px solid #7c7c7c;border-bottom:1.2px solid #9a9a9a"></div><div class="r" style="left:19.25px;top:675.10px;width:15.2px;height:15.3px;background:#f0f0f0;border-left:1px solid #fcfcfc;border-top:1px solid #fcfcfc;border-right:1.2px solid #7c7c7c;border-bottom:1.2px solid #9a9a9a"></div><div class="r" style="left:35.50px;top:675.10px;width:15.2px;height:15.3px;background:#f0f0f0;border-left:1px solid #fcfcfc;border-top:1px solid #fcfcfc;border-right:1.2px solid #7c7c7c;border-bottom:1.2px solid #9a9a9a"></div><div class="r" style="left:51.75px;top:675.10px;width:15.2px;height:15.3px;background:#f0f0f0;border-left:1px solid #fcfcfc;border-top:1px solid #fcfcfc;border-right:1.2px solid #7c7c7c;border-bottom:1.2px solid #9a9a9a"></div><div class="r" style="left:68.00px;top:675.10px;width:15.2px;height:15.3px;background:#f0f0f0;border-left:1px solid #fcfcfc;border-top:1px solid #fcfcfc;border-right:1.2px solid #7c7c7c;border-bottom:1.2px solid #9a9a9a"></div><div class="r" style="left:3.00px;top:690.60px;width:15.2px;height:15.3px;background:#f0f0f0;border-left:1px solid #fcfcfc;border-top:1px solid #fcfcfc;border-right:1.2px solid #7c7c7c;border-bottom:1.2px solid #9a9a9a"></div><div class="r" style="left:19.25px;top:690.60px;width:15.2px;height:15.3px;background:#f0f0f0;border-left:1px solid #fcfcfc;border-top:1px solid #fcfcfc;border-right:1.2px solid #7c7c7c;border-bottom:1.2px solid #9a9a9a"></div><div class="r" style="left:35.50px;top:690.60px;width:15.2px;height:15.3px;background:#f0f0f0;border-left:1px solid #fcfcfc;border-top:1px solid #fcfcfc;border-right:1.2px solid #7c7c7c;border-bottom:1.2px solid #9a9a9a"></div><div class="r" style="left:51.75px;top:690.60px;width:15.2px;height:15.3px;background:#f0f0f0;border-left:1px solid #fcfcfc;border-top:1px solid #fcfcfc;border-right:1.2px solid #7c7c7c;border-bottom:1.2px solid #9a9a9a"></div><div class="r" style="left:68.00px;top:690.60px;width:15.2px;height:15.3px;background:#f0f0f0;border-left:1px solid #fcfcfc;border-top:1px solid #fcfcfc;border-right:1.2px solid #7c7c7c;border-bottom:1.2px solid #9a9a9a"></div><svg class="r" style="left:0;top:0" width="768" height="713"><g stroke="#b4b4b4" fill="none" stroke-width="1"><path d="M4.8 678.3 h4.2 v2.2 h-4.2 M4.8 685.2 h4.2 v2.2 h-4.2 M9 680.5 v4.7 M9 682.8 h1.5"/></g><path d="M10.5 682.8 l1.6 -1.6 h4.6 v3.2 h-4.6 z" fill="#c4c4c4" stroke="#b0b0b0" stroke-width="0.7"/><g stroke="#b8b8b8" fill="none" stroke-width="1"><path d="M21.5 678.3 h4.2 M21.5 687.3 h4.2 M25.7 678.3 v9"/></g><path d="M21.5 681.3 h7.5 l2.2 1.5 l-2.2 1.5 h-7.5 z" fill="#c4c4c4" stroke="#b0b0b0" stroke-width="0.7"/><rect x="38.2" y="678" width="10.2" height="10.2" rx="1.3" fill="#cfe9d2" stroke="#5fa070" stroke-width="0.9"/><rect x="40.2" y="678.3" width="6.2" height="3.6" fill="#eef7ef" stroke="#5fa070" stroke-width="0.6"/><rect x="40.6" y="684.6" width="5.4" height="3.4" fill="#a8d4b0" stroke="#5fa070" stroke-width="0.6"/><path d="M55.8 681.5 l1.5 -2.8 h5.6 l1.5 2.8 z" fill="#cfe9d2" stroke="#5fa070" stroke-width="0.8"/><rect x="54.2" y="681.5" width="11.4" height="5.8" rx="2.4" fill="#b6dcbc" stroke="#5fa070" stroke-width="0.9"/><rect x="55.5" y="684" width="9" height="1.2" fill="#5fa070"/><rect x="59.2" y="683.8" width="1.5" height="1.5" fill="#d8d040"/><path d="M71.6 677.8 h7.8 a1 1 0 0 1 1 1 v7 a1 1 0 0 1 -1 1 h-1.3 l0.6 2 l-2.6 -2 h-4.5 a1 1 0 0 1 -1 -1 v-7 a1 1 0 0 1 1 -1 z" fill="#dff1e1" stroke="#5fa070" stroke-width="0.9"/><text x="73.6" y="685.6" font-size="7.2" font-family="Liberation Sans" font-weight="bold" fill="#3f7a4f">?</text><rect x="5.2" y="694.4" width="9.4" height="8.3" fill="none" stroke="#bdbdbd" stroke-width="1"/><g stroke="#b6b6b6" fill="none" stroke-width="0.9"><path d="M21.4 694.2 h3 l1.5 1.5 v4.5 h-4.5 z M24.8 697.2 h3 l2.6 2.6 v3.2 h-5.6 z"/></g><g stroke="#bcbcbc" fill="none" stroke-width="0.9"><path d="M37.8 702.8 v-5 a3 3 0 0 1 3 -3 h2.5 a3 3 0 0 1 3 3 v5 z"/><path d="M42 698 v4.5 M44 700.5 h4 v2.3"/></g><g fill="#cfe9d2" stroke="#5fa070" stroke-width="0.9"><rect x="54.6" y="697.2" width="7.5" height="5.2" rx="1"/><path d="M62.1 699.8 l3.4 -2 v4 z"/><path d="M55.3 694.5 h6" stroke="#8cc49a" stroke-width="1.2"/><circle cx="56" cy="694.6" r="1" /><circle cx="60.5" cy="694.6" r="1"/></g><rect x="56" y="698.6" width="4.2" height="2.4" fill="#8ccc9a"/><circle cx="75.7" cy="698.4" r="5" fill="#e4f3e6" stroke="#5fa070" stroke-width="1"/><ellipse cx="75.7" cy="698.3" rx="3.1" ry="1.9" fill="#f58a8a"/><path d="M74 698.3 h3.4" stroke="#fff" stroke-width="0.7"/></svg><div class="r" style="left:90.9px;top:673.9px;width:680px;height:34.5px;background:#ffffe2;border-top:1.3px solid #7a7a7a;border-left:1.3px solid #7a7a7a"></div><div class="t" style="left:93.00px;top:677.84px;font-size:7.01px;color:#777;font-weight:normal;font-style:normal;transform:scale(1.0,1.2);transform-origin:left 5.96px;">Clic gauche dans la ligne bleue (Prix), pour afficher une information complémentaire.</div><div class="t" style="left:93.00px;top:686.29px;font-size:7.01px;color:#777;font-weight:normal;font-style:normal;transform:scale(1.0,1.2);transform-origin:left 5.96px;">Clic gauche sur le diagramme d'évolution des prix pour augmenter la durée ;</div><div class="t" style="left:93.00px;top:694.74px;font-size:7.01px;color:#777;font-weight:normal;font-style:normal;transform:scale(1.0,1.2);transform-origin:left 5.96px;">Clic droit sur le diagramme d'évolution des prix pour diminuer la durée.</div><div class="r" style="left:0px;top:710.6px;width:768px;height:1px;background:#fafafa;"></div><div class="r" style="left:0px;top:711.6px;width:768px;height:1.4px;background:#a6a6a6;"></div><svg class="r" style="left:755px;top:710px" width="13" height="3"><path d="M2 3 L4 1.8 L13 1.6 L13 3 Z" fill="#78b88a"/></svg>
</body></html>
